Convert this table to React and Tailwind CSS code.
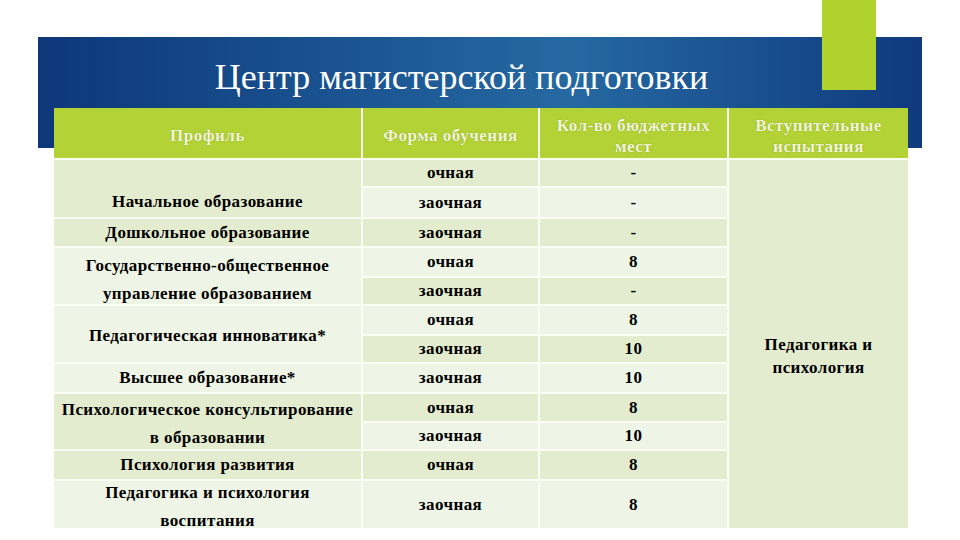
import React from 'react';

const D = 'bg-[#e3ecce]';
const L = 'bg-[#eef5e6]';

function Cell({ children, tone, className = '' }) {
  return (
    <div className={`flex items-center justify-center text-center text-[17px] font-bold leading-[28px] tracking-[0.4px] text-black ${tone} ${className}`}>
      {children}
    </div>
  );
}

function Head({ children }) {
  return (
    <div className="flex items-center justify-center pt-[5px] text-center text-[17px] font-bold leading-[21px] tracking-[0.5px] text-[#f3f6d6] bg-[#b2d235] [text-shadow:0_0_1px_rgba(80,100,20,0.6)]">
      {children}
    </div>
  );
}

export default function App() {
  return (
    <div className="relative w-[960px] h-[540px] bg-white overflow-hidden font-['Liberation_Serif','Times_New_Roman',serif]">
      {/* accent bar */}
      <div className="absolute left-[822px] top-0 w-[54px] h-[90px] bg-[#afd22c] z-10" />

      {/* banner */}
      <div className="ml-[38px] mt-[37px] w-[884px] h-[111px] bg-gradient-to-r from-[#0e377a] via-[#2669a1] via-60% to-[#103a7e] flex justify-center pt-[20px]">
        <h1 className="text-[36px] leading-[40px] text-white pr-[37px]">Центр магистерской подготовки</h1>
      </div>

      {/* table */}
      <div className="relative z-20 ml-[54px] -mt-[40px] w-[854px] grid grid-cols-[307px_175px_187px_179px] gap-[2px] bg-[#fbfdf5] grid-rows-[50px_26px_29px_27px_28px_26px_28px_26px_28px_27px_26px_28px_47px]">
        <Head>Профиль</Head>
        <Head>Форма обучения</Head>
        <Head>Кол-во бюджетных<br />мест</Head>
        <Head>Вступительные<br />испытания</Head>

        <Cell tone={D} className="row-span-2 pt-[26px]">Начальное образование</Cell>
        <Cell tone={D}>очная</Cell>
        <Cell tone={D}>-</Cell>
        <Cell tone={D} className="row-span-12 pt-[24px] !leading-[23px]">Педагогика и<br />психология</Cell>

        <Cell tone={L}>заочная</Cell>
        <Cell tone={L}>-</Cell>

        <Cell tone={D}>Дошкольное образование</Cell>
        <Cell tone={D}>заочная</Cell>
        <Cell tone={D}>-</Cell>

        <Cell tone={L} className="row-span-2 pt-[7px]">Государственно-общественное<br />управление образованием</Cell>
        <Cell tone={L}>очная</Cell>
        <Cell tone={L}>8</Cell>

        <Cell tone={D}>заочная</Cell>
        <Cell tone={D}>-</Cell>

        <Cell tone={L} className="row-span-2 pt-[4px]">Педагогическая инноватика*</Cell>
        <Cell tone={L}>очная</Cell>
        <Cell tone={L}>8</Cell>

        <Cell tone={D}>заочная</Cell>
        <Cell tone={D}>10</Cell>

        <Cell tone={L}>Высшее образование*</Cell>
        <Cell tone={L}>заочная</Cell>
        <Cell tone={L}>10</Cell>

        <Cell tone={D} className="row-span-2 pt-[4px]">Психологическое консультирование<br />в образовании</Cell>
        <Cell tone={D}>очная</Cell>
        <Cell tone={D}>8</Cell>

        <Cell tone={L}>заочная</Cell>
        <Cell tone={L}>10</Cell>

        <Cell tone={D}>Психология развития</Cell>
        <Cell tone={D}>очная</Cell>
        <Cell tone={D}>8</Cell>

        <Cell tone={L} className="pt-[4px]">Педагогика и психология<br />воспитания</Cell>
        <Cell tone={L}>заочная</Cell>
        <Cell tone={L}>8</Cell>
      </div>
    </div>
  );
}
